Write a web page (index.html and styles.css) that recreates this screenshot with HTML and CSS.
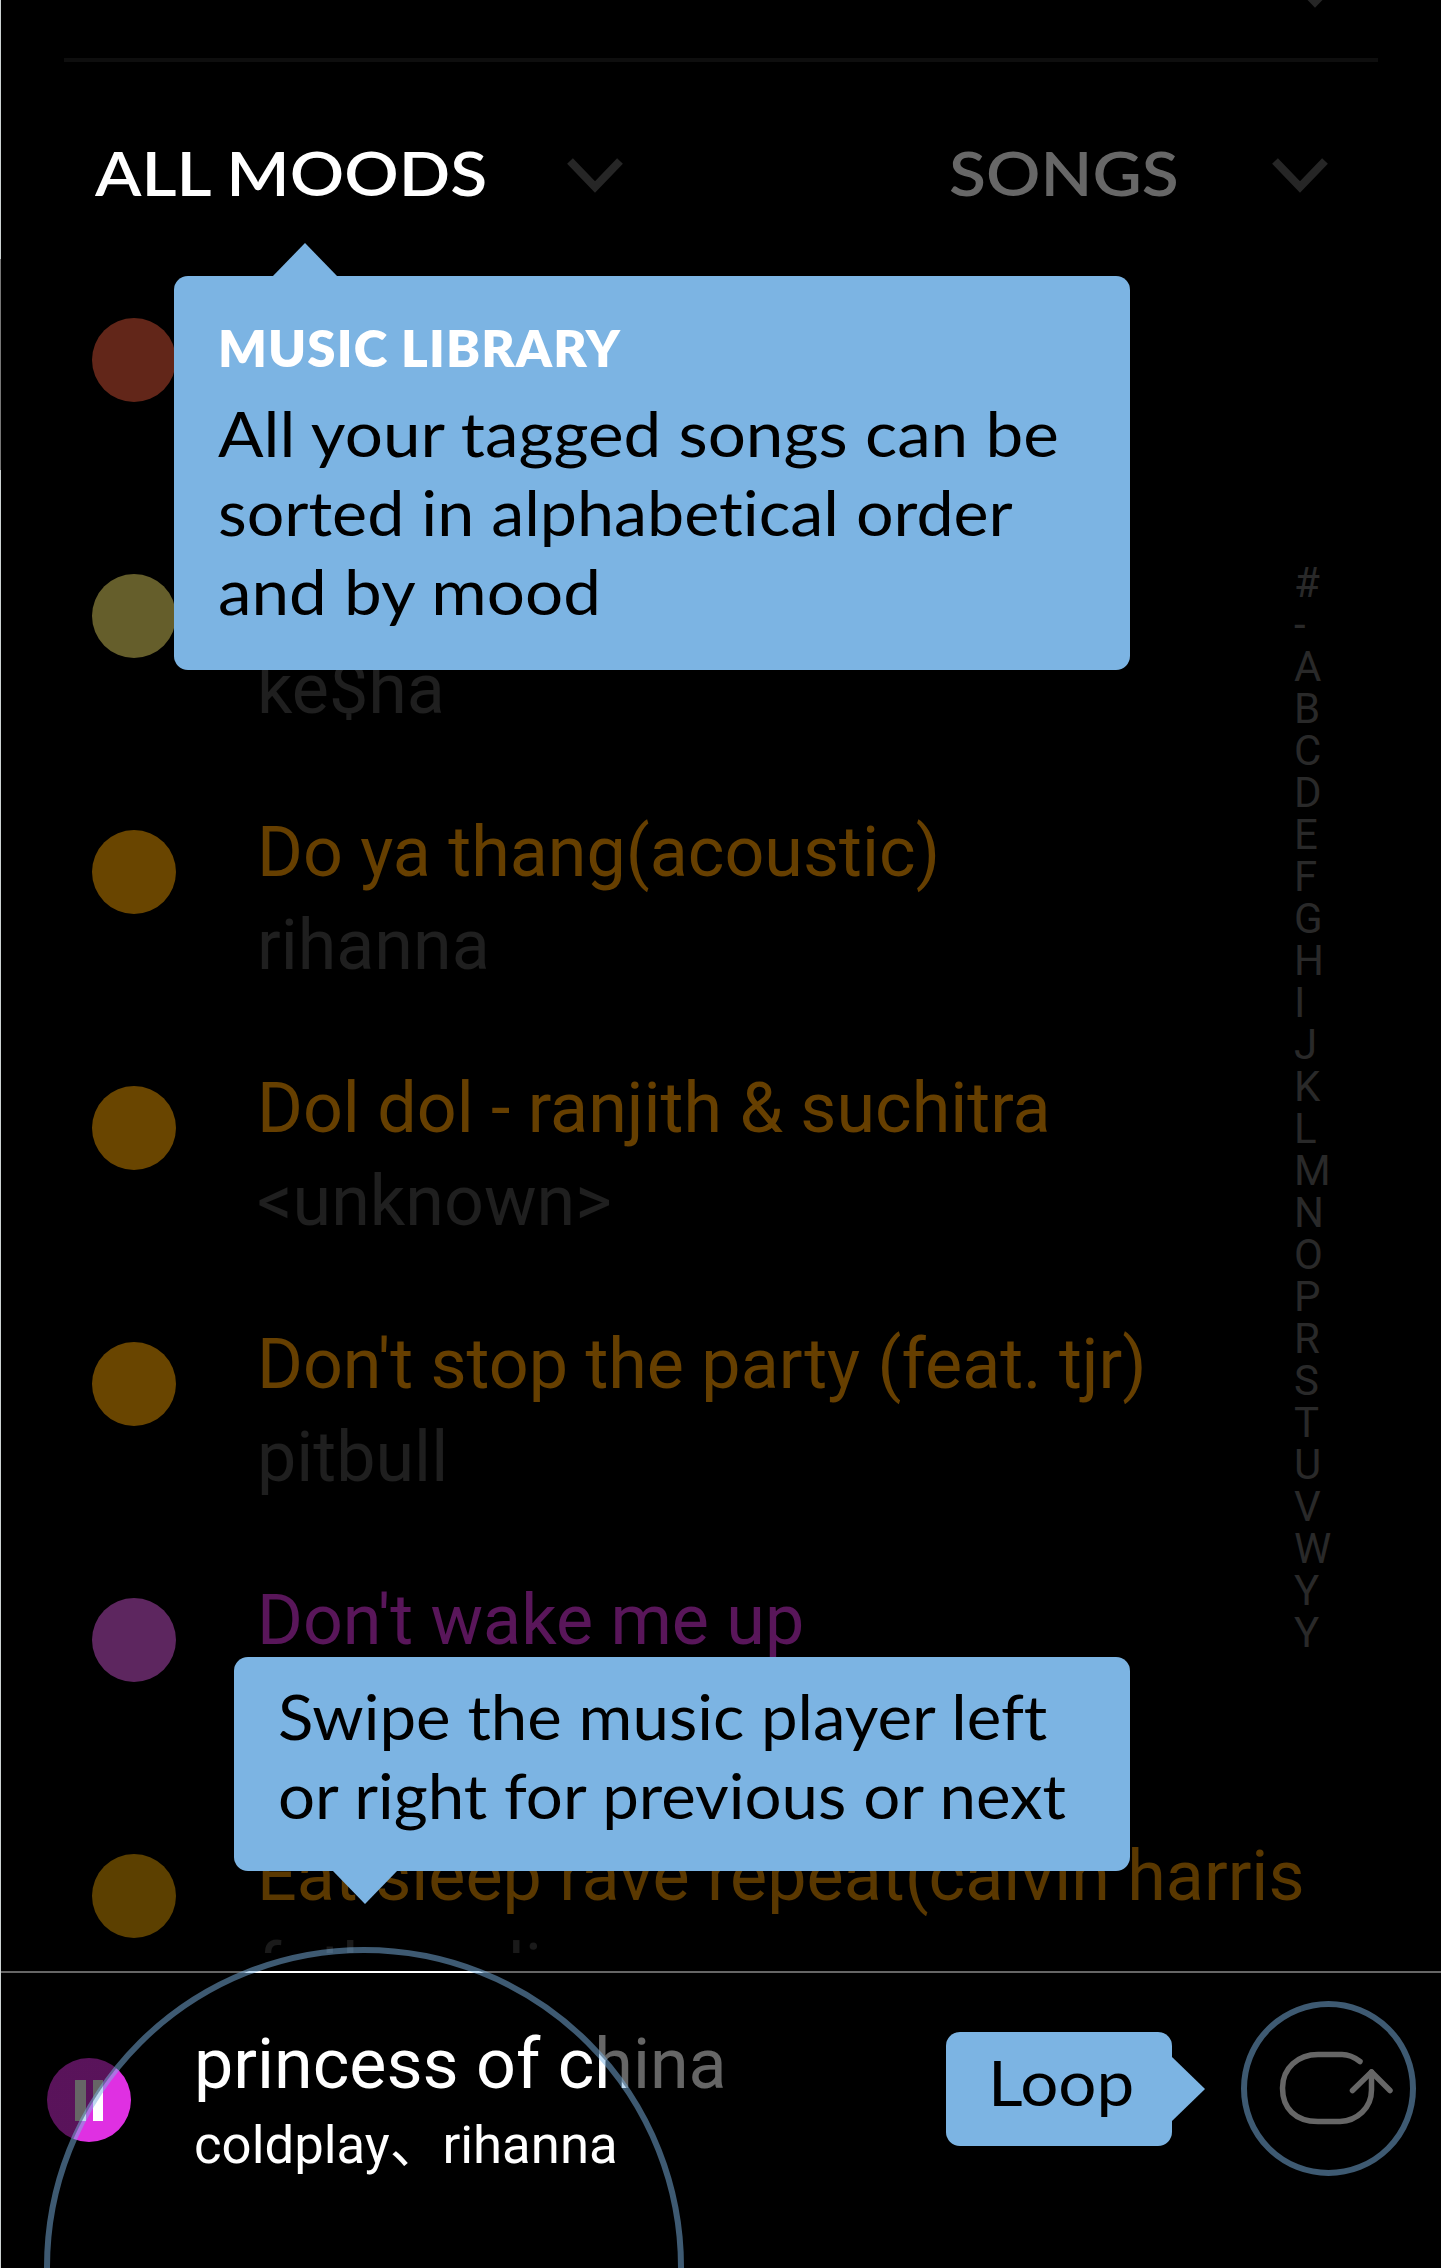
FILE: index.html
```
<!DOCTYPE html>
<html lang="en">
<head>
<meta charset="utf-8">
<title>Music library</title>
<link rel="stylesheet" href="styles.css">
</head>
<body>
<main class="screen">
  <header class="topbar">
    <svg class="caret caret-top" viewBox="0 0 60 38"><path d="M5 5 L30 31 L55 5"/></svg>
  </header>
  <nav class="filters">
    <span class="filter active">ALL MOODS</span>
    <svg class="caret" viewBox="0 0 60 38"><path d="M5 5 L30 31 L55 5"/></svg>
    <span class="filter songs">SONGS</span>
    <svg class="caret" viewBox="0 0 60 38"><path d="M5 5 L30 31 L55 5"/></svg>
  </nav>
  <section class="library">
    <ul class="tracks">
      <li class="track red"><i class="dot"></i></li>
      <li class="track olive"><i class="dot"></i><div class="meta"><p class="title">&nbsp;</p><p class="artist">ke$ha</p></div></li>
      <li class="track amber"><i class="dot"></i><div class="meta"><p class="title">Do ya thang(acoustic)</p><p class="artist">rihanna</p></div></li>
      <li class="track amber"><i class="dot"></i><div class="meta"><p class="title">Dol dol - ranjith &amp; suchitra</p><p class="artist">&lt;unknown&gt;</p></div></li>
      <li class="track amber"><i class="dot"></i><div class="meta"><p class="title">Don't stop the party (feat. tjr)</p><p class="artist">pitbull</p></div></li>
      <li class="track purple"><i class="dot"></i><div class="meta"><p class="title">Don't wake me up</p></div></li>
      <li class="track faded"><i class="dot"></i><div class="meta"><p class="title">Eat sleep rave repeat(calvin harris</p><p class="artist">fatboy slim</p></div></li>
    </ul>
    <ol class="index">
      <li>#</li><li>-</li><li>A</li><li>B</li><li>C</li><li>D</li><li>E</li><li>F</li><li>G</li><li>H</li><li>I</li><li>J</li><li>K</li><li>L</li><li>M</li><li>N</li><li>O</li><li>P</li><li>R</li><li>S</li><li>T</li><li>U</li><li>V</li><li>W</li><li>Y</li><li>Y</li>
    </ol>
  </section>
  <footer class="player">
    <span class="pause"><i></i><i></i></span>
    <div class="now">
      <p class="song">princess of china</p>
      <p class="by">coldplay、rihanna</p>
    </div>
    <svg class="loop" viewBox="0 0 112 72"><path d="M80 9.500 Q71 2.500 62 2.500 L38 2.500 C18 2.500 2.500 16 2.500 36 C2.500 56 15 69.500 38 69.500 L60 69.500 C77 69 91.500 56 91.500 38 L91.500 20"/><path d="M72.500 38.500 L91.500 20 L110 38.500"/></svg>
  </footer>
  <div class="spotlight"></div>
  <div class="ring ring-swipe"></div>
  <div class="ring ring-loop"></div>
  <aside class="tip tip-library">
    <h2>MUSIC LIBRARY</h2>
    <p><span class="wide">All your tagged songs can be</span><span class="snug">sorted in alphabetical order</span><span class="wide">and by mood</span></p>
  </aside>
  <aside class="tip tip-swipe">
    <p><span class="tight">Swipe the music player left</span><span class="tight">or right for previous or next</span></p>
  </aside>
  <aside class="tip tip-loop"><p><span class="wide">Loop</span></p></aside>
</main>
</body>
</html>
```
FILE: styles.css
```
* { box-sizing: border-box; margin: 0; padding: 0; }
body { background: #000; font-family: Roboto, sans-serif; }
ul, ol { list-style: none; }

.screen {
  display: flex;
  flex-direction: column;
  position: relative;
  width: 1441px;
  height: 2268px;
  overflow: hidden;
  padding-left: 1px;
  background:
    linear-gradient(#ccd2d2 259px, #777 259px, #777 470px, #ccd2d2 470px) 0 0 / 1px 100% no-repeat,
    #000;
}

.caret { flex: none; width: 60px; height: 38px; fill: none; stroke: #262626; stroke-width: 8; }
.topbar {
  height: 62px;
  margin: 0 63px;
  border-bottom: 4px solid #0e0e0e;
  display: flex;
  justify-content: flex-end;
}
.caret-top { margin: -29px 33px 0 0; }

.filters {
  height: 214px;
  display: flex;
  align-items: flex-start;
  padding: 94px 110px 0 94px;
  font-family: Lato, sans-serif;
  font-size: 61px;
  font-weight: 600;
  line-height: 34px;
  white-space: nowrap;
}
.filter { transform: scaleX(1.11); transform-origin: 0 0; }
.active { color: #fff; width: 470px; }
.songs { color: #676767; margin-left: 324px; width: 321px; }

.library { height: 1677px; overflow: hidden; display: flex; }
.tracks { width: 1303px; flex: none; }
.track { height: 256px; display: flex; align-items: flex-start; padding: 42px 0 0 91px; }
.dot { width: 84px; height: 84px; border-radius: 50%; flex: none; background: currentColor; }
.meta { margin: -24px 0 0 81px; font-size: 70px; line-height: 93px; white-space: nowrap; }
.artist { color: #1f1f1f; }
.red { color: #622619; }
.olive { color: #655e2b; }
.amber { color: #694500; }
.amber .title { color: #663f00; }
.purple { color: #5d265f; }
.purple .title { color: #59165a; }
.faded { color: #5c4000; }
.faded .title { color: #5a3800; }
.faded .artist { color: #1a1a1a; }
.index {
  flex: none;
  width: 146px;
  margin-left: -10px;
  padding-top: 286px;
  color: #292929;
  font-size: 42px;
  line-height: 42px;
}

.player {
  height: 297px;
  margin-top: 18px;
  border-top: 2px solid #fff;
  display: flex;
  align-items: flex-start;
  color: #fff;
  white-space: nowrap;
}
.pause {
  width: 84px;
  height: 84px;
  margin: 85px 0 0 46px;
  border-radius: 50%;
  background: #df30e2;
  display: flex;
  justify-content: center;
  align-items: center;
  gap: 7px;
}
.pause i { width: 10.500px; height: 41px; background: #fff; }
.now { margin: 45px 0 0 63px; width: 1086px; }
.song { font-size: 70px; line-height: 93px; }
.by { margin-top: 2px; font-family: Roboto, "Noto Sans CJK SC", sans-serif; font-size: 52.700px; line-height: 64px; }
.loop { width: 112px; height: 72px; margin-top: 79px; flex: none; fill: none; stroke: #fff; stroke-width: 5.500; stroke-linecap: round; stroke-linejoin: round; overflow: visible; }

/* Dims the player except inside the swipe ring */
.spotlight {
  position: absolute;
  left: 1px;
  top: 1971px;
  width: 1440px;
  height: 297px;
  background: radial-gradient(circle at 363px 296px, transparent 317px, rgba(0, 0, 0, 0.6) 318px);
}
.ring { position: absolute; border: 6px solid rgba(124, 180, 228, 0.5); border-radius: 50%; }
.ring-swipe { left: 44px; top: 1947px; width: 640px; height: 640px; }
.ring-loop { left: 1241px; top: 2001px; width: 175px; height: 175px; }

.tip {
  position: absolute;
  background: #7cb4e3;
  border-radius: 14px;
  color: #000;
  font-family: Lato, sans-serif;
  font-size: 62px;
  line-height: 79px;
  white-space: nowrap;
}
.tip::after { content: ""; position: absolute; background: #7cb4e3; }
.tip span { display: block; width: max-content; font-variant-ligatures: none; transform-origin: 0 0; }
.tip h2 { color: #fff; font-size: 51px; font-weight: 800; line-height: 62px; letter-spacing: 1.100px; }
.tip .wide { transform: scaleX(1.087); }
.tip .snug { transform: scaleX(1.07); }
.tip .tight { transform: scaleX(1.055); }
.tip-library { left: 174px; top: 276px; width: 956px; height: 394px; padding: 41px 0 0 44px; }
.tip-library p { margin-top: 15px; }
.tip-library::after { left: 98px; top: -33px; width: 66px; height: 34px; clip-path: polygon(50% 0, 100% 100%, 0 100%); }
.tip-swipe { left: 234px; top: 1657px; width: 896px; height: 214px; padding: 20px 0 0 44px; }
.tip-swipe::after { left: 98px; bottom: -33px; width: 66px; height: 34px; clip-path: polygon(0 0, 100% 0, 50% 100%); }
.tip-loop { left: 946px; top: 2032px; width: 226px; height: 114px; padding: 11px 0 0 42px; }
.tip-loop::after { right: -33px; top: 24px; width: 34px; height: 66px; clip-path: polygon(0 0, 100% 50%, 0 100%); }
```
